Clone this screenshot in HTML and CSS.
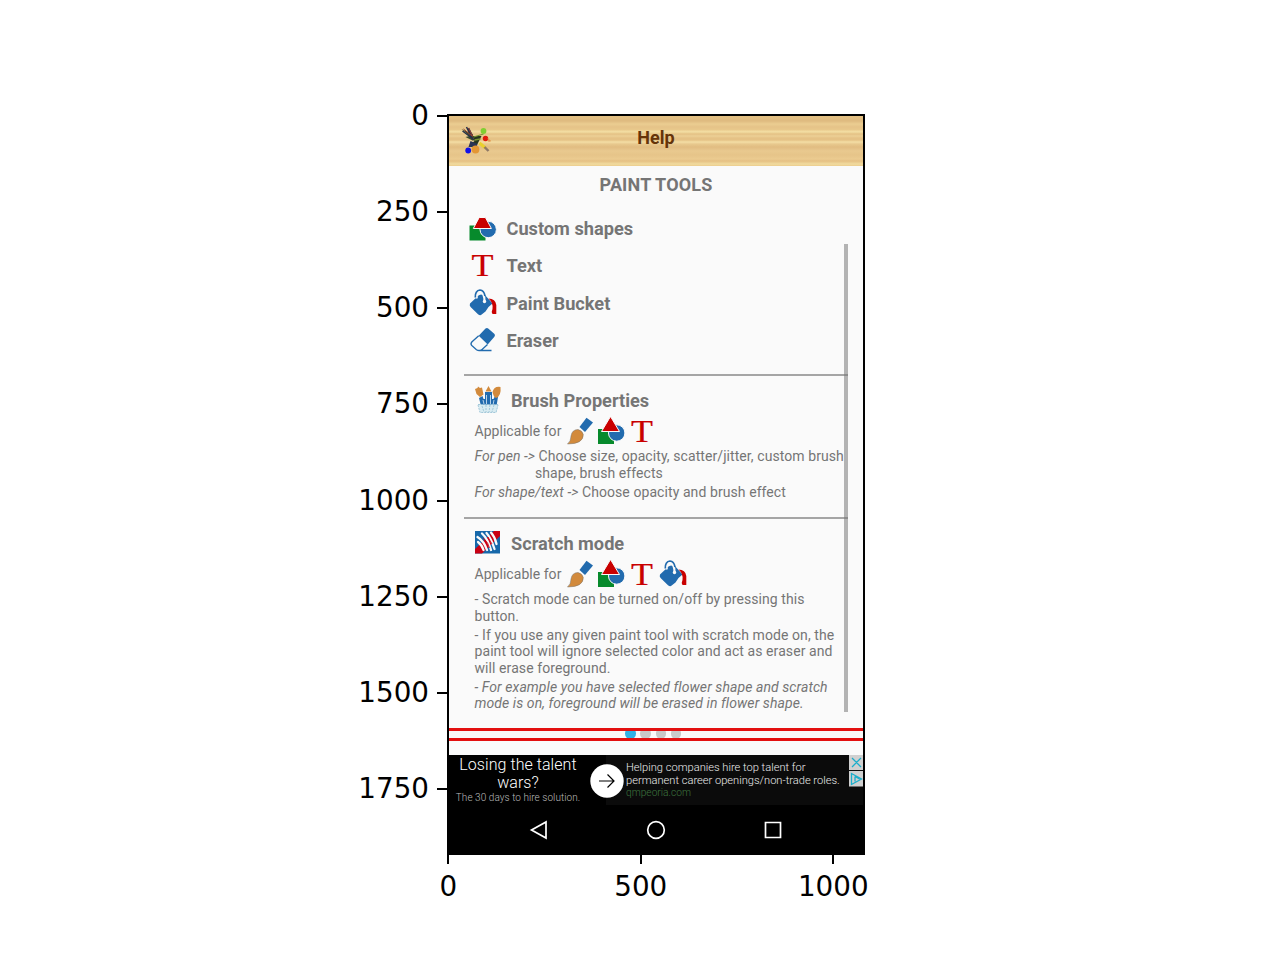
FILE: index.html
```
<!DOCTYPE html>
<html lang="en">
<head>
<meta charset="utf-8">
<title>Help</title>
<link rel="stylesheet" href="styles.css">
</head>
<body>
<svg class="defs" width="0" height="0" aria-hidden="true">
  <symbol id="shapes" viewBox="0 0 28 28">
    <path fill="#078a2c" d="M1 12h16v15H1z"/>
    <circle cx="19.7" cy="16" r="8.2" fill="#226bae" stroke="#fafafa"/>
    <path d="M13.500-.5 22.500 14.500H4.500z" fill="#c90000" stroke="#fafafa" stroke-width="1"/>
  </symbol>
  <symbol id="shapes-cut" viewBox="0 0 28 28">
    <path fill="#078a2c" d="M.5 11.500h16v15H.5z"/>
    <circle cx="19.200" cy="15.500" r="8.200" fill="#226bae" stroke="#fafafa"/>
    <path d="M10.200 3.500h6.200l6 11H4.300z" fill="#c90000" stroke="#fafafa" stroke-width="1"/>
  </symbol>
  <symbol id="bucket" viewBox="0 0 28 28">
    <path d="M1 14.500 9.500 6.500Q12 5 16 6L23.500 14.500Q19 17.500 16.500 22.500L12 26Q10.500 26.500 9 25.200L1.600 18Q.2 16.500 1 14.500Z" fill="#226bae"/>
    <path d="M7.800 9.500Q6.500 4 11 3.300Q15.500 3.500 15.500 12" fill="none" stroke="#fafafa" stroke-width="2.200"/>
    <path d="M6.300 8.500Q6 1.600 11 1Q15 1.200 16 7" fill="none" stroke="#226bae" stroke-width="1.700"/>
    <circle cx="15.500" cy="12.500" r="1.700" fill="#fafafa"/>
    <path d="M19.500 9.500Q26.500 9.500 27.300 16V25H23.500Q22 23 23.500 20Q24.500 14 19.500 9.500Z" fill="#c90000"/>
  </symbol>
  <symbol id="eraser" viewBox="0 0 28 28">
    <path d="M16.500 2.500Q18 1.300 19.500 2.700L25.500 8Q26.500 9.300 25.400 10.700L18.700 18.500 9.700 9.700Z" fill="#226bae"/>
    <path d="M9.700 9.700 2.800 16Q1.200 18 2.800 19.500L7.500 23.700Q10 25.500 12.500 23.900L18.500 18.500M9 24.500H22.500" fill="none" stroke="#226bae" stroke-width="1.300"/>
  </symbol>
  <symbol id="brush" viewBox="0 0 28 28">
    <path d="M20.500 .8 27 5.500 19 15 13.500 10Z" fill="#226bae"/>
    <path d="M12 12.500Q16.500 13.500 17.300 17.500Q17.500 27 1.500 27Q5 24 5 19Q6 12.500 12 12.500Z" fill="#d28a3c" stroke="#77736c" stroke-width=".5"/>
  </symbol>
  <symbol id="brushes" viewBox="0 0 28 28">
    <path d="M5 12 8.500 10 9.500 13H11V6h7v7h1.500L21 10l3 1-1.500 9H7Z" fill="#226bae"/>
    <path d="M12.500 9v9M16.500 9v9M9 14l1 4M20 14l-1 5" stroke="#c8deee" stroke-width=".9"/>
    <path d="M1 3 3.500 2 4 .5 6 2 8 1.500 9.500 8.500 6 11 2.500 8ZM11.500 5.500 14.500 0 17.500 5.500ZM18.500 6Q20 0 26.500 1Q27.500 10 22 12Q19.500 11 18.500 6Z" fill="#d28a3c"/>
    <path d="M4 18.500H24.500L22.500 26.500H6Z" fill="#d8ebf1"/>
    <path d="M4 18.500H24.500M4 19l2 7.500h16l2-7.500M8 20l2 6M12 19v7M16 19l-1 7M20 19l-2 7" fill="none" stroke="#91bdd2" stroke-width=".8" stroke-dasharray="2 1"/>
  </symbol>
  <symbol id="scratch" viewBox="0 0 28 28">
    <path d="M1 2h25v22.500H1z" fill="#1768aa"/>
    <path d="M20 2h6v5L8 24.500H1V20Z" fill="#c90013"/>
    <path d="M3.500 8Q10 12 13 21M8 4.500Q14 10 17 21M12.500 4Q17 9 20.500 20M17 3.500Q21 8 22.500 15M4 13Q8 16 9.500 21" fill="none" stroke="#fafafa" stroke-width="2.300" stroke-linecap="round"/>
    <path d="M9 9Q15 14 15.500 19M14 8 18 15" fill="none" stroke="#c90013" stroke-width=".8"/>
  </symbol>
</svg>
<main class="figure">
  <div class="y-axis">
    <div class="y-tick">0</div><div class="y-tick">250</div><div class="y-tick">500</div><div class="y-tick">750</div><div class="y-tick">1000</div><div class="y-tick">1250</div><div class="y-tick">1500</div><div class="y-tick">1750</div>
  </div>
  <section class="phone">
    <header class="header">
      <svg class="logo" viewBox="0 0 30 30">
        <path d="M1 3 12 8 13 15 5 11 9 10Z" fill="#3b4a2c"/>
        <path d="M2 5 14 14M6 1l6 12M8 2l4 8" stroke="#27304a" stroke-width="1.500"/>
        <path d="M3 3l11 9M8 2l4 8" stroke="#9c4230"/>
        <path d="M12 10 21 10 17 18 9 19 14 15Z" fill="#26351f"/>
        <path d="M13 11 23 8M14 14 20 13" stroke="#799432" stroke-width="1.300"/>
        <path d="M10 15 17 18 16 21H8Z" fill="#293355"/>
        <path d="M19 17 25 22" stroke="#ead02c" stroke-width="3"/><path d="m24 21 4 4" stroke="#8e7866" stroke-width="2.400"/>
        <circle cx="23" cy="5" r="2.900" fill="#80cf32"/><circle cx="25" cy="12.500" r="2.700" fill="#e0190c"/><path d="m27 12 4 3-3 1Z" fill="#e39a50"/>
        <circle cx="7.700" cy="24.500" r="2.900" fill="#1010e8"/><circle cx="15" cy="23.500" r="3.900" fill="#e39635"/>
      </svg>
      <h1 class="title">Help</h1>
    </header>
    <div class="content">
      <h2 class="caption">PAINT TOOLS</h2>
      <ul class="tools">
        <li class="tool"><svg class="icon"><use href="#shapes-cut"/></svg><span class="low">Custom shapes</span></li>
        <li class="tool"><svg class="icon" viewBox="0 0 28 28"><text class="serif-t" x="2.500" y="24" textLength="22" lengthAdjust="spacingAndGlyphs">T</text></svg><span>Text</span></li>
        <li class="tool"><svg class="icon"><use href="#bucket"/></svg><span>Paint Bucket</span></li>
        <li class="tool"><svg class="icon"><use href="#eraser"/></svg><span>Eraser</span></li>
      </ul>
      <section class="topic">
        <h3 class="heading"><svg class="icon"><use href="#brushes"/></svg><span class="low">Brush Properties</span></h3>
        <div class="applies"><span class="label">Applicable for</span><svg class="icon"><use href="#brush"/></svg><svg class="icon"><use href="#shapes"/></svg><svg class="icon" viewBox="0 0 28 28"><text class="serif-t" x="3" y="25" textLength="22" lengthAdjust="spacingAndGlyphs">T</text></svg></div>
        <p class="para"><i>For pen -&gt;</i> Choose size, opacity, scatter/jitter, custom brush<br><span class="indent">shape, brush effects</span></p>
        <p class="para"><i>For shape/text -&gt;</i> Choose opacity and brush effect</p>
      </section>
      <section class="topic">
        <h3 class="heading"><svg class="icon"><use href="#scratch"/></svg><span class="low">Scratch mode</span></h3>
        <div class="applies"><span class="label">Applicable for</span><svg class="icon"><use href="#brush"/></svg><svg class="icon"><use href="#shapes"/></svg><svg class="icon" viewBox="0 0 28 28"><text class="serif-t" x="3" y="25" textLength="22" lengthAdjust="spacingAndGlyphs">T</text></svg><svg class="icon"><use href="#bucket"/></svg></div>
        <p class="para">- Scratch mode can be turned on/off by pressing this<br>button.</p>
        <p class="para">- If you use any given paint tool with scratch mode on, the<br>paint tool will ignore selected color and act as eraser and<br>will erase foreground.</p>
        <p class="para"><i>- For example you have selected flower shape and scratch<br>mode is on, foreground will be erased in flower shape.</i></p>
      </section>
      <div class="scrollbar"></div>
    </div>
    <div class="pager"><span class="dot active"></span><span class="dot"></span><span class="dot"></span><span class="dot"></span></div>
    <aside class="ad">
      <div class="pitch"><div class="slogan">Losing the talent<br>wars?</div><div class="sub">The 30 days to hire solution.</div></div>
      <div class="offer"><div>Helping companies hire top talent for</div><div>permanent career openings/non-trade roles.</div><div class="domain">qmpeoria.com</div></div>
      <svg class="go" viewBox="0 0 34 34"><circle cx="17" cy="17" r="16.700" fill="#fff"/><path d="M9 17H24M17.500 10.500 24 17 17.500 23.500" fill="none" stroke="#000" stroke-width="1.200"/></svg>
      <svg class="choices" viewBox="0 0 14 32"><path d="M0 0h14v15H0zM0 16h14v15.500H0z" fill="#d0d0d0"/><path d="m3 3 9 9m0-9-9 9M2.500 18.500v11l10-5.500ZM6 21.500v5M6 21.500l4.500 2.500" fill="none" stroke="#1aaecb" stroke-width="1.300"/></svg>
    </aside>
    <nav class="nav">
      <svg class="nav-icon" viewBox="0 0 20 20"><path d="M17 2V18L2.500 10Z"/></svg>
      <svg class="nav-icon" viewBox="0 0 20 20"><circle cx="10" cy="10" r="8.300"/></svg>
      <svg class="nav-icon" viewBox="0 0 20 20"><path d="M2.500 2.500h15v15h-15z"/></svg>
    </nav>
  </section>
  <div class="x-axis"><div class="x-tick">0</div><div class="x-tick">500</div><div class="x-tick">1000</div></div>
</main>
</body>
</html>
```
FILE: styles.css
```
* { box-sizing: border-box; }
body { margin: 0; background: #fff; font-family: Roboto, sans-serif; color: #757575; }
h1, h2, h3, p, ul { margin: 0; padding: 0; font-size: inherit; }
.defs { display: block; }
.figure { display: grid; grid-template-columns: 447px 418px; grid-template-rows: 741px 50px; width: 1280px; height: 960px; padding-top: 114px; }
.y-axis { margin-top: -46.500px; font: 27.78px/1 "DejaVu Sans", sans-serif; color: #000; }
.y-tick { display: flex; height: 96.250px; align-items: center; justify-content: flex-end; gap: 8px; }
.y-tick::after { content: ""; width: 10px; height: 2px; background: #000; }
.x-axis { grid-column: 2; display: grid; grid-template-columns: repeat(3, 192.500px); margin-left: -95px; font: 27.78px/1 "DejaVu Sans", sans-serif; color: #000; }
.x-tick { display: flex; flex-direction: column; align-items: center; gap: 9px; }
.x-tick::before { content: ""; width: 2px; height: 9px; background: #000; }
.phone { display: flex; flex-direction: column; border: 2px solid #000; border-bottom: 0; background: #fafafa; overflow: hidden; }
.header { display: grid; grid-template-columns: 60px 1fr 60px; height: 50px; flex: none; background: linear-gradient(#e3c083 0 2px, #dfbb80 4px 5px, #ebcd91 8px, #e5c388 11px, #e9c98c 14px, #f2dca1 15px 16px, #e4c184 18px, #ecd095 20px, #e5c286 22px 24px, #f4dea5 26px, #e8c98e 28px, #e1bc81 31px, #e9c98f 35px, #e6c489 39px, #ebcb90 43px, #e5c083 45px, #f1db9f 48px, #eccc8d 50px); }
.logo { width: 31px; height: 30px; margin: 9.500px 0 0 10.500px; }
.title { text-align: center; font-size: 18px; line-height: 43px; font-weight: 700; color: #653409; }
.content { position: relative; height: 562px; flex: none; }
.caption { height: 38px; text-align: center; font-size: 18px; line-height: 38px; font-weight: 700; letter-spacing: .150px; }
.tools { list-style: none; padding: 5.800px 0 14.900px; }
.tool { display: flex; align-items: center; height: 37.300px; gap: 9.500px; padding-left: 20px; font-size: 18.200px; font-weight: 700; }
.low { padding-top: 1px; }
.icon { width: 28px; height: 28px; flex: none; overflow: visible; }
.serif-t { font: 32px "Liberation Serif", serif; fill: #c90000; stroke: #c90000; stroke-width: .200px; }
.topic { margin-left: 15px; width: 384px; height: 143px; border-top: 2px solid #a5a5a5; padding: 9px 0 0 10.500px; }
.heading { display: flex; align-items: center; height: 31px; gap: 9.500px; font-size: 18.200px; font-weight: 700; }
.heading .icon { margin-left: -1px; }
.applies { display: flex; align-items: center; height: 30px; gap: 3px; margin-bottom: 2.300px; font-size: 14px; letter-spacing: .040px; }
.label { width: 88.500px; margin-right: -.500px; }
.para { font-size: 14px; line-height: 16.500px; letter-spacing: .078px; margin-bottom: 2.500px; white-space: nowrap; }
.indent { margin-left: 60.500px; }
.scrollbar { position: absolute; left: 395px; top: 78px; width: 4px; height: 468px; background: rgba(120,120,120,.55); }
.pager { position: relative; display: flex; justify-content: center; gap: 4.500px; height: 13px; flex: none; margin: 0 -2px; padding-right: 5.500px; }
.pager::after { content: ""; position: absolute; inset: 0; border: solid #e31010; border-width: 3px 2px; }
.dot { width: 10.600px; height: 10.600px; border-radius: 50%; background: #c9c9c9; }
.active { background: #32b2e6; }
.ad { position: relative; display: grid; grid-template-columns: 157px 1fr; height: 50px; flex: none; margin-top: 14px; background: #0b0b0b; color: #eee; }
.pitch { background: #000; text-align: center; padding: 1px 19px 0 0; white-space: nowrap; }
.slogan { font-size: 16px; line-height: 18px; letter-spacing: .060px; font-weight: 300; color: #fff; }
.sub { font-size: 10px; line-height: 12px; letter-spacing: .050px; font-weight: 300; color: #bbb; }
.offer { font-size: 11.120px; line-height: 13px; font-weight: 300; padding: 6px 0 0 20px; white-space: nowrap; }
.domain { font-size: 10.200px; line-height: 11px; color: #3d753e; }
.go { position: absolute; left: 141px; top: 8.500px; width: 34px; height: 34px; }
.choices { position: absolute; right: 0; top: 0; width: 14px; height: 32px; }
.nav { flex: 1; display: flex; justify-content: center; align-items: center; gap: 97px; background: #000; }
.nav-icon { width: 20px; height: 20px; fill: none; stroke: #fff; stroke-width: 1.700px; }
```
